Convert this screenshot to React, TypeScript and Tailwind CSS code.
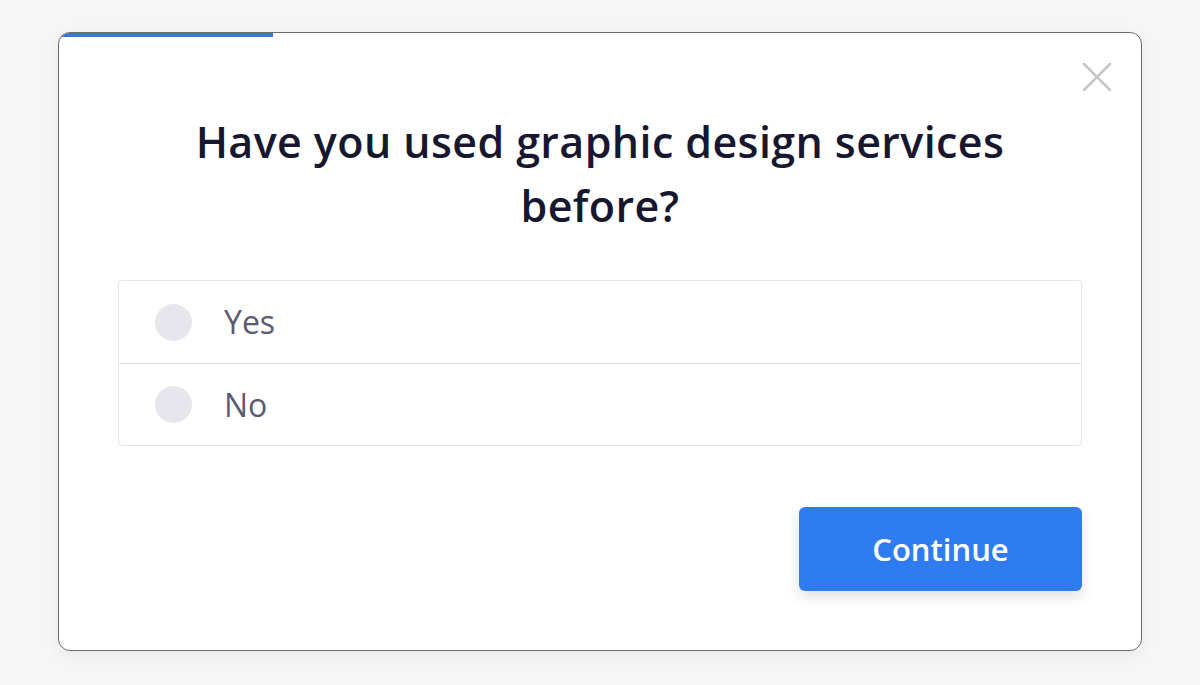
import React, { useState } from 'react'

const options = ['Yes', 'No']

export default function App() {
  const [selected, setSelected] = useState<string | null>(null)

  return (
    <div className="min-h-[685px] w-[1200px] bg-[#f6f6f6] pt-8 px-[58px] font-['Open_Sans','Noto_Sans',sans-serif]">
      {/* Modal */}
      <div className="relative h-[619px] overflow-hidden rounded-[12px] border border-[#6b6b6b] bg-white shadow-[0_4px_18px_rgba(0,0,0,0.06)]">
        <div className="h-[4px] w-[214px] bg-[#3a74d4]" />
        <button className="absolute right-[28px] top-[28px] text-[#c6c6c6]" aria-label="Close">
          <svg width="32" height="32" viewBox="0 0 32 32" fill="none" stroke="currentColor" strokeWidth="2.5" strokeLinecap="round">
            <path d="M3 3 L29 29 M29 3 L3 29" />
          </svg>
        </button>

        <div className="px-[59px] pt-[73px]">
          <h1 className="mx-auto max-w-[880px] text-center text-[43px] font-semibold leading-[64px] tracking-[0.4px] text-[#17172f]">
            Have you used graphic design services before?
          </h1>

          <div className="mt-[42px] rounded-[4px] border border-[#e4e4e8]">
            {options.map((opt, i) => (
              <label
                key={opt}
                onClick={() => setSelected(opt)}
                className={
                  'flex h-[82px] cursor-pointer items-center gap-[32px] pl-[36px] ' +
                  (i > 0 ? 'border-t border-[#e4e4e8]' : '')
                }
              >
                <span
                  className={
                    'h-[37px] w-[37px] rounded-full ' +
                    (selected === opt ? 'bg-[#2f7cf0]' : 'bg-[#e6e6ec]')
                  }
                />
                <span className="text-[32px] text-[#5b5b72]">{opt}</span>
              </label>
            ))}
          </div>

          <div className="mt-[61px] flex justify-end">
            <button className="h-[84px] w-[283px] rounded-[6px] bg-[#2f7cf0] text-[31px] font-semibold text-white shadow-[0_6px_14px_rgba(0,0,0,0.12)]">
              Continue
            </button>
          </div>
        </div>
      </div>
    </div>
  )
}
